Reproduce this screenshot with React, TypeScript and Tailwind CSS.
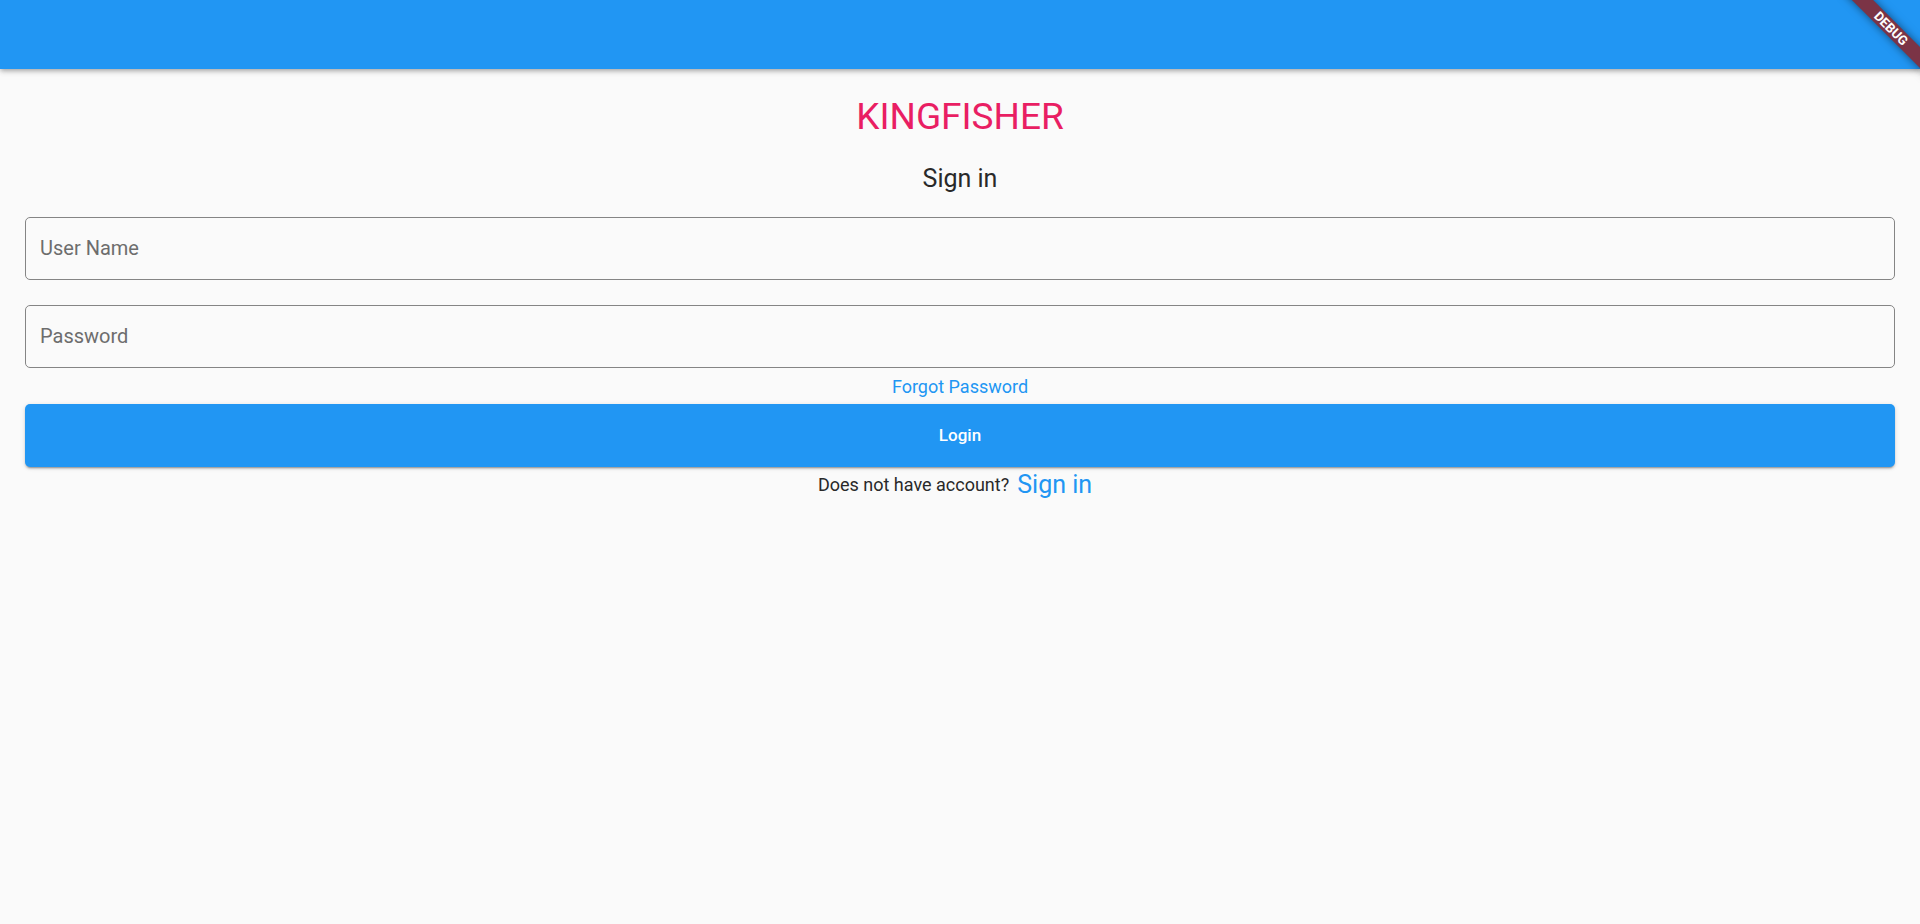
export default function App() {
  return (
    <div className="relative min-h-screen overflow-hidden bg-[#fafafa] font-[Roboto,sans-serif] text-[#292929]">
      <header className="h-[69px] bg-[#2196f3] shadow-[0_2px_4px_-1px_rgba(0,0,0,0.2),0_3px_5px_rgba(0,0,0,0.12),0_1px_8px_rgba(0,0,0,0.1)]" />
      <div className="absolute top-[21px] -right-[31px] flex h-[15px] w-[120px] rotate-45 items-center justify-center bg-[#7b3446] text-[13px] leading-none font-bold text-white shadow-[0_0_8px_rgba(0,0,0,0.5)]">
        DEBUG
      </div>
      <main className="flex flex-col px-[25px] pt-[25px]">
        <h1 className="text-center text-[37px] leading-[46px] text-[#e91e63]">KINGFISHER</h1>
        <h2 className="mt-6 text-center text-[25px] leading-[30px]">Sign in</h2>
        <form className="mt-[23px] flex flex-col" onSubmit={(event) => event.preventDefault()}>
          <input aria-label="User Name" placeholder="User Name" className="h-[63px] rounded-[5px] border border-[#858585] px-[14px] pb-[2px] text-[20px] placeholder:text-[#6d6d6d]" />
          <input aria-label="Password" type="password" placeholder="Password" className="mt-[25px] h-[63px] rounded-[5px] border border-[#858585] px-[14px] pb-[2px] text-[20px] placeholder:text-[#6d6d6d]" />
          <button type="button" className="h-9 text-[18px] text-[#2196f3]">Forgot Password</button>
          <button type="submit" className="h-[63px] rounded-[5px] bg-[#2196f3] text-[17px] font-medium text-white shadow-[0_3px_1px_-2px_rgba(0,0,0,0.2),0_2px_2px_rgba(0,0,0,0.14),0_1px_5px_rgba(0,0,0,0.12)]">Login</button>
        </form>
        <p className="flex items-center justify-center text-[18px] leading-9">
          Does not have account?
          <button type="button" className="pr-[10px] pl-2 text-[25px] text-[#2196f3]">Sign in</button>
        </p>
      </main>
    </div>
  );
}
